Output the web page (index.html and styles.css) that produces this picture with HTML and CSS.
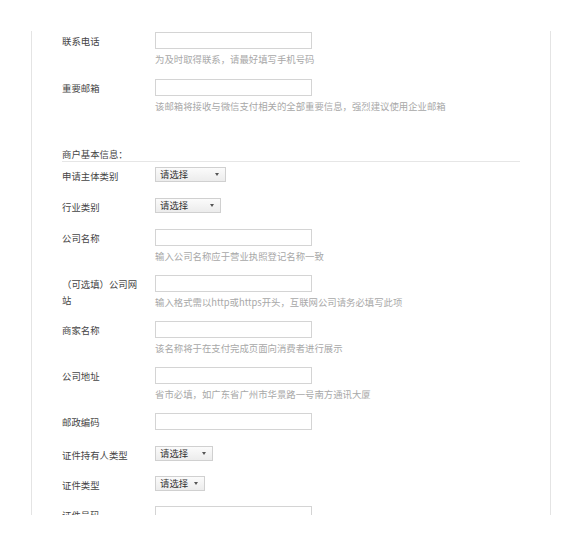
FILE: index.html
```html
<!DOCTYPE html>
<html lang="zh-CN">
<head>
<meta charset="utf-8">
<title>商户信息</title>
<link rel="stylesheet" href="styles.css">
</head>
<body>
<div class="panel">
  <div class="row row-hint row-first">
    <div class="label">联系电话</div>
    <div class="field">
      <div class="input"></div>
      <div class="hint">为及时取得联系，请最好填写手机号码</div>
    </div>
  </div>
  <div class="row row-hint row-first">
    <div class="label">重要邮箱</div>
    <div class="field">
      <div class="input"></div>
      <div class="hint">该邮箱将接收与微信支付相关的全部重要信息，强烈建议使用企业邮箱</div>
    </div>
  </div>

  <div class="section-title">商户基本信息：</div>

  <div class="row row-select">
    <div class="label">申请主体类别</div>
    <div class="field"><div class="select w71"><span>请选择</span><i class="arrow"></i></div></div>
  </div>
  <div class="row row-select">
    <div class="label">行业类别</div>
    <div class="field"><div class="select w66"><span>请选择</span><i class="arrow"></i></div></div>
  </div>
  <div class="row row-hint">
    <div class="label">公司名称</div>
    <div class="field">
      <div class="input"></div>
      <div class="hint">输入公司名称应于营业执照登记名称一致</div>
    </div>
  </div>
  <div class="row row-hint">
    <div class="label">（可选填）公司网站</div>
    <div class="field">
      <div class="input"></div>
      <div class="hint">输入格式需以http或https开头，互联网公司请务必填写此项</div>
    </div>
  </div>
  <div class="row row-hint">
    <div class="label">商家名称</div>
    <div class="field">
      <div class="input"></div>
      <div class="hint">该名称将于在支付完成页面向消费者进行展示</div>
    </div>
  </div>
  <div class="row row-hint">
    <div class="label">公司地址</div>
    <div class="field">
      <div class="input"></div>
      <div class="hint">省市必填，如广东省广州市华景路一号南方通讯大厦</div>
    </div>
  </div>
  <div class="row row-plain">
    <div class="label">邮政编码</div>
    <div class="field"><div class="input"></div></div>
  </div>
  <div class="row row-select row-tight">
    <div class="label">证件持有人类型</div>
    <div class="field"><div class="select w58"><span>请选择</span><i class="arrow"></i></div></div>
  </div>
  <div class="row row-select row-tight">
    <div class="label">证件类型</div>
    <div class="field"><div class="select w50"><span>请选择</span><i class="arrow"></i></div></div>
  </div>
  <div class="row row-plain">
    <div class="label">证件号码</div>
    <div class="field"><div class="input"></div></div>
  </div>
</div>
</body>
</html>
```
FILE: styles.css
```css
html, body {
  margin: 0;
  padding: 0;
  background: #ffffff;
}

body {
  font-family: "Noto Sans CJK SC", "Microsoft YaHei", sans-serif;
  font-size: 9.4px;
  color: #444444;
}

.panel {
  box-sizing: border-box;
  width: 520px;
  height: 484px;
  margin: 31px 0 0 31px;
  padding: 1px 30px 0 30px;
  border-left: 1px solid #e4e4e4;
  border-right: 1px solid #e4e4e4;
  overflow: hidden;
}

.row {
  display: grid;
  grid-template-columns: 93px 1fr;
  align-items: start;
}

.row-hint { margin-bottom: 12px; }
.row-first { margin-bottom: 13px; }
.row-plain { margin-bottom: 16px; }
.row-select { margin-bottom: 14px; }
.row-tight { margin-bottom: 13px; }

.label {
  width: 80px;
  line-height: 16px;
  padding-top: 1px;
  color: #454545;
}

.field {
  display: flex;
  flex-direction: column;
  align-items: flex-start;
}

.input {
  box-sizing: border-box;
  width: 157px;
  height: 17px;
  border: 1px solid #d4d4d4;
  background: #ffffff;
}

.hint {
  margin-top: 3px;
  line-height: 14px;
  color: #a8a8a8;
  white-space: nowrap;
}

.section-title {
  margin-top: 34px;
  line-height: 14px;
  border-bottom: 1px solid #e6e6e6;
  margin-bottom: 5px;
  color: #454545;
}

.select {
  box-sizing: border-box;
  display: flex;
  align-items: center;
  justify-content: space-between;
  height: 15px;
  padding: 0 6px 0 4px;
  border: 1px solid #d0d0d0;
  background: linear-gradient(#fbfbfb, #ececec);
  color: #333333;
  line-height: 13px;
}

.w71 { width: 71px; }
.w66 { width: 66px; }
.w58 { width: 58px; }
.w50 { width: 50px; }

.arrow {
  display: block;
  width: 0;
  height: 0;
  border-left: 2.5px solid transparent;
  border-right: 2.5px solid transparent;
  border-top: 3px solid #555555;
}
```
